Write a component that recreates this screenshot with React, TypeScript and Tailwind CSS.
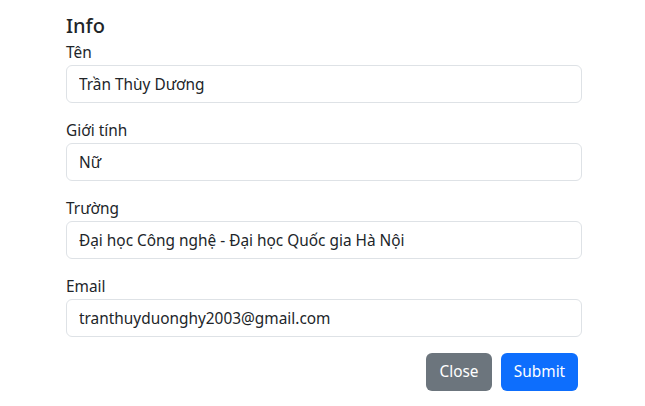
export default function App() {
  const fields = [
    { label: 'Tên', value: 'Trần Thùy Dương' },
    { label: 'Giới tính', value: 'Nữ' },
    { label: 'Trường', value: 'Đại học Công nghệ - Đại học Quốc gia Hà Nội' },
    { label: 'Email', value: 'tranthuyduonghy2003@gmail.com' },
  ]

  return (
    <div className="min-h-screen bg-white text-[#212529] font-['Noto_Sans',sans-serif]">
      <div className="ml-[66px] w-[516px] pt-[14px]">
        {/* Title */}
        <h5 className="text-[20px] leading-[24px] font-medium mb-[3px]">Info</h5>

        {fields.map((f) => (
          <div key={f.label} className="mb-4">
            <label className="block text-[15.4px] leading-[24px]">{f.label}</label>
            <input
              readOnly
              value={f.value}
              className="block w-full h-[38px] px-3 border border-[#dee2e6] rounded-[6px] text-[15.4px] leading-[24px] text-[#212529] outline-none"
            />
          </div>
        ))}

        {/* Footer buttons */}
        <div className="flex justify-end gap-[9px] pr-[4px] -mt-[4px] pt-1">
          <button className="w-[66px] h-[38px] rounded-[6px] bg-[#6c757d] text-white text-[15.4px]">
            Close
          </button>
          <button className="w-[77px] h-[38px] rounded-[6px] bg-[#0d6efd] text-white text-[15.4px]">
            Submit
          </button>
        </div>
      </div>
    </div>
  )
}
